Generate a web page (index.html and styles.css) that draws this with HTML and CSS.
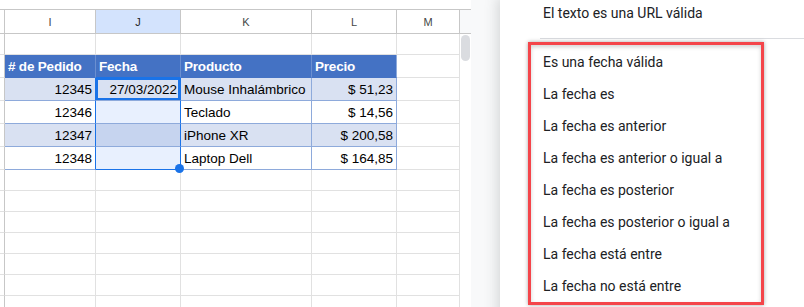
FILE: index.html
```html
<!DOCTYPE html>
<html lang="es">
<head>
  <meta charset="UTF-8" />
  <title>Validación de datos</title>
  <link rel="stylesheet" href="styles.css">
</head>
<body>
  <div class="app">
    <div class="sheet">
      <div class="grid" id="grid"></div>
      <div class="gutter">
        <div class="gutter-head"></div>
        <div class="thumb"></div>
      </div>
    </div>

    <div class="side">
      <div class="menu">
        <div class="menu-item">El texto es una URL válida</div>
        <div class="menu-sep"></div>
        <div class="menu-group">
          <div class="menu-item">Es una fecha válida</div>
          <div class="menu-item">La fecha es</div>
          <div class="menu-item">La fecha es anterior</div>
          <div class="menu-item">La fecha es anterior o igual a</div>
          <div class="menu-item">La fecha es posterior</div>
          <div class="menu-item">La fecha es posterior o igual a</div>
          <div class="menu-item">La fecha está entre</div>
          <div class="menu-item">La fecha no está entre</div>
        </div>
      </div>
    </div>
  </div>

  <script>
    const orders = [
      { id: 12345, date: "27/03/2022", product: "Mouse Inhalámbrico", price: "$ 51,23" },
      { id: 12346, date: "", product: "Teclado", price: "$ 14,56" },
      { id: 12347, date: "", product: "iPhone XR", price: "$ 200,58" },
      { id: 12348, date: "", product: "Laptop Dell", price: "$ 164,85" }
    ];

    const grid = document.getElementById("grid");

    function cell(cls, text) {
      const div = document.createElement("div");
      div.className = "cell " + cls;
      div.textContent = text || "";
      grid.appendChild(div);
      return div;
    }

    // column letters
    cell("ch rh-corner");
    ["I", "J", "K", "L", "M"].forEach(l => cell("ch" + (l === "J" ? " ch-sel" : ""), l));

    // empty first row
    cell("rh");
    for (let i = 0; i < 5; i++) cell("");

    // table header
    cell("rh");
    cell("th", "# de Pedido");
    cell("th th-sel", "Fecha");
    cell("th", "Producto");
    cell("th th-last", "Precio");
    cell("");

    orders.forEach((o, i) => {
      const band = i % 2 === 0 ? " band" : "";
      const last = i === orders.length - 1;
      cell("rh");
      cell("td num edge" + band, o.id);
      const j = cell("td num pick" + band + (i === 0 ? " active" : "") + (last ? " pick-end" : ""), o.date);
      if (last) {
        const dot = document.createElement("span");
        dot.className = "handle";
        j.appendChild(dot);
      }
      cell("td" + band, o.product);
      cell("td num td-last" + band, o.price);
      cell("");
    });

    for (let r = 0; r < 7; r++) {
      cell("rh");
      for (let i = 0; i < 5; i++) cell("");
    }
  </script>
</body>
</html>
```

FILE: styles.css
```css
body {
  margin: 0;
  background: #fff;
}

.app {
  display: flex;
  width: 804px;
  height: 307px;
  overflow: hidden;
}

/* spreadsheet */

.sheet {
  display: flex;
  width: 471px;
  padding-top: 9px;
  box-sizing: border-box;
  background: #fff;
  font-family: "Liberation Sans", Arial, sans-serif;
  font-size: 13.5px;
  color: #000;
}

.grid {
  display: grid;
  grid-template-columns: 5px 91px 85px 131px 85px 63px;
  grid-template-rows: 25px 21px 23px 23px 23px 23px 23px repeat(7, 21px);
}

.cell {
  box-sizing: border-box;
  display: flex;
  align-items: center;
  padding: 0 3px;
  white-space: nowrap;
  border-right: 1px solid #e1e1e1;
  border-bottom: 1px solid #e1e1e1;
}

.rh {
  padding: 0;
  border-right-color: #c7c7c7;
}

.ch {
  justify-content: center;
  padding: 0;
  border-top: 1px solid #c7c7c7;
  border-right-color: #c7c7c7;
  border-bottom-color: #c7c7c7;
  font-size: 11px;
  color: #444746;
}

.ch-sel {
  background: #d3e3fd;
  color: #1f1f1f;
}

.th {
  background: #4472c4;
  color: #fff;
  font-weight: bold;
  letter-spacing: -0.2px;
  border-right-color: #6b8fd0;
  border-bottom-color: #4472c4;
}

.th-sel {
  border-bottom-color: #1a73e8;
}

.th-last {
  border-right-color: #8eaadb;
}

.td {
  border-right-color: #8eaadb;
  border-bottom-color: #8eaadb;
}

.band {
  background: #d9e1f2;
}

.num {
  justify-content: flex-end;
}

.edge {
  border-right-color: #1a73e8;
}

.pick {
  position: relative;
  background: #e8f0fe;
  border-right-color: #1a73e8;
}

.pick.band {
  background: #c6d4ef;
}

.pick.active {
  background: #d9e1f2;
  box-shadow: inset 0 0 0 2px #1a73e8;
}

.pick-end {
  border-bottom-color: #1a73e8;
}

.handle {
  position: absolute;
  right: -4px;
  bottom: -4px;
  width: 9px;
  height: 9px;
  border-radius: 50%;
  background: #1a73e8;
  z-index: 2;
}

.gutter {
  width: 11px;
}

.gutter-head {
  height: 25px;
  box-sizing: border-box;
  border-top: 1px solid #c7c7c7;
  border-bottom: 1px solid #c7c7c7;
  background: #f8f9fa;
}

.thumb {
  width: 9px;
  height: 26px;
  margin: 1px 0 0 1px;
  border-radius: 5px;
  background: #dadce0;
}

/* side panel with dropdown */

.side {
  flex: 1;
  background: #f8f9fa;
  padding-left: 29px;
}

.menu {
  height: 330px;
  margin-top: -3px;
  background: #fff;
  box-shadow: -3px 0 12px rgba(60, 64, 67, 0.18);
  font-family: Roboto, "Noto Sans", sans-serif;
  font-size: 14px;
  color: #202124;
}

.menu-item {
  height: 32px;
  line-height: 32px;
  padding-left: 43px;
  white-space: nowrap;
}

.menu-sep {
  height: 1px;
  margin: 9px 0 3px 40px;
  background: #dadce0;
}

.menu-group {
  width: 236px;
  margin-left: 28px;
  padding-top: 1px;
  box-sizing: border-box;
  border: 3px solid #f4454a;
  box-shadow: 0 0 4px rgba(0, 0, 0, 0.35), inset 0 2px 4px rgba(0, 0, 0, 0.18);
}

.menu-group .menu-item {
  padding-left: 12px;
}
```
